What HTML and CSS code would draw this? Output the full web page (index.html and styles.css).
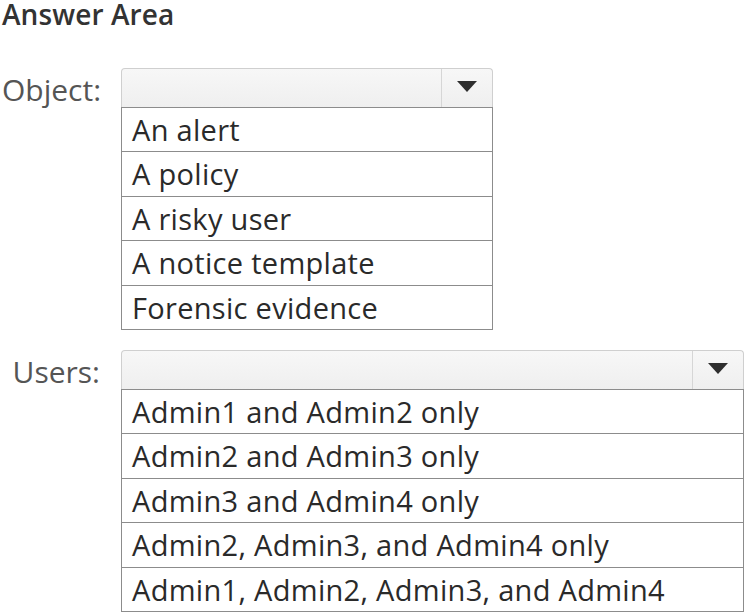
FILE: index.html
```html
<!DOCTYPE html>
<html lang="en">
<head>
<meta charset="utf-8">
<title>Answer Area</title>
<link rel="stylesheet" href="styles.css">
</head>
<body>
<div class="page">
  <h1 class="title">Answer Area</h1>

  <div class="field field-object">
    <div class="label">Object:</div>
    <div class="control control-object">
      <div class="select">
        <div class="select-value"></div>
        <div class="select-btn">
          <svg class="arrow" width="20" height="11" viewBox="0 0 20 11"><polygon points="0,0 20,0 10,11" fill="#2e2e2e"/></svg>
        </div>
      </div>
      <ul class="options">
        <li>An alert</li>
        <li>A policy</li>
        <li>A risky user</li>
        <li>A notice template</li>
        <li>Forensic evidence</li>
      </ul>
    </div>
  </div>

  <div class="field field-users">
    <div class="label">Users:</div>
    <div class="control control-users">
      <div class="select">
        <div class="select-value"></div>
        <div class="select-btn">
          <svg class="arrow" width="20" height="11" viewBox="0 0 20 11"><polygon points="0,0 20,0 10,11" fill="#2e2e2e"/></svg>
        </div>
      </div>
      <ul class="options">
        <li>Admin1 and Admin2 only</li>
        <li>Admin2 and Admin3 only</li>
        <li>Admin3 and Admin4 only</li>
        <li>Admin2, Admin3, and Admin4 only</li>
        <li>Admin1, Admin2, Admin3, and Admin4</li>
      </ul>
    </div>
  </div>
</div>
</body>
</html>
```

FILE: styles.css
```css
html, body {
  margin: 0;
  padding: 0;
  background: #ffffff;
}

.page {
  font-family: "Open Sans", "Noto Sans", "Liberation Sans", sans-serif;
  color: #222;
  padding: 0 0 0 2px;
}

.title {
  margin: 0;
  height: 30px;
  font-size: 28px;
  font-weight: 600;
  line-height: 28px;
  color: #333;
  letter-spacing: 0.1px;
}

.field {
  display: flex;
  align-items: flex-start;
}

.field-object {
  margin-top: 38px;
}

.field-users {
  margin-top: 20px;
}

.label {
  width: 98px;
  padding-right: 21px;
  padding-top: 2px;
  text-align: right;
  font-size: 30px;
  line-height: 39px;
  color: #555;
}

.control-object {
  width: 372px;
}

.control-users {
  width: 623px;
}

.select {
  display: flex;
  height: 38px;
  border: 1px solid #cfcfcf;
  border-bottom: none;
  border-radius: 4px 4px 0 0;
  background: linear-gradient(#f7f7f7, #efefef);
}

.select-value {
  flex: 1;
}

.select-btn {
  width: 50px;
  border-left: 1px solid #d6d6d6;
  display: flex;
  align-items: center;
  justify-content: center;
}

.arrow {
  display: block;
  margin-top: -3px;
}

.options {
  list-style: none;
  margin: 0;
  padding: 0;
  border: 1px solid #8c8c8c;
}

.options li {
  height: 43.4px;
  line-height: 43px;
  padding-left: 10px;
  font-size: 29px;
  color: #2a2a2a;
  letter-spacing: 0.3px;
  border-top: 1px solid #8c8c8c;
  white-space: nowrap;
}

.options li:first-child {
  border-top: none;
}
```
